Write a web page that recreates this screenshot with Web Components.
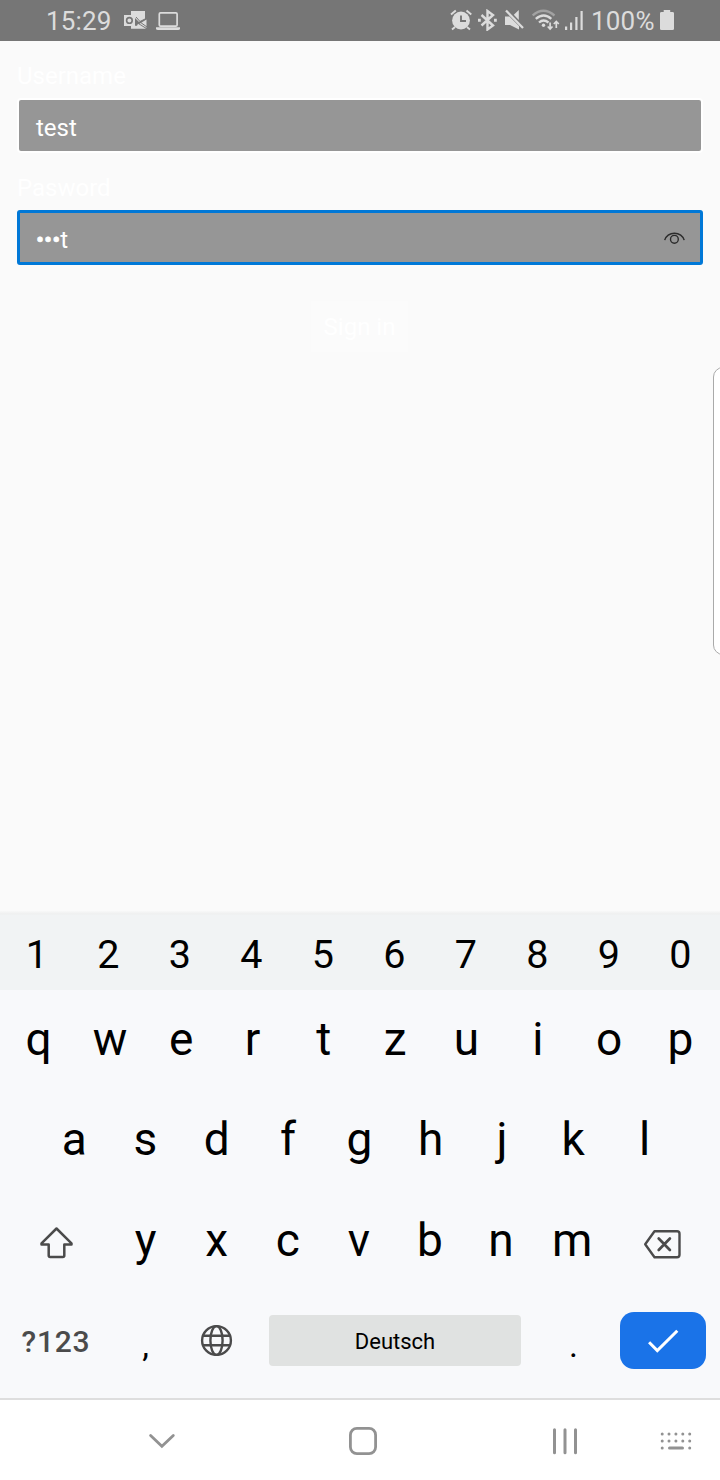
<!DOCTYPE html>
<html lang="en">
<head>
<meta charset="utf-8">
<title>Sign in</title>
<style>
html,body{margin:0;padding:0;width:720px;height:1480px;overflow:hidden;background:#fafafa;font-family:Roboto,sans-serif}
</style>
</head>
<body>
<phone-screen></phone-screen>
<script>
const define = (name, html, setup) => {
  const t = document.createElement('template');
  t.innerHTML = html;
  customElements.define(name, class extends HTMLElement {
    connectedCallback() {
      if (this.shadowRoot) return;
      this.attachShadow({mode: 'open'}).appendChild(t.content.cloneNode(true));
      if (setup) setup(this, this.shadowRoot);
    }
  });
};

/* Glyphs: [viewBox, markup]; the drawn size equals the viewBox size. */
const ICONS = {
  outlook: ['124 10 24 20', '<path d="M131 11h14v8l-6 3-4-4h-4zM146.500 19.500v8.500l-7-4.300zM131 28.800v-3h6l1-2 8 5z" fill="#dcdcdc"/><path d="M124 15h11v11h-11z" fill="#dcdcdc"/><path d="M136 17l4 4.500 7-3.500M136 24l4-2 7 5" stroke="#767676" stroke-width="1" fill="none"/><circle cx="129.400" cy="20.400" r="2.800" fill="none" stroke="#767676" stroke-width="1.600"/>'],
  laptop: ['156 10 24 20', '<rect x="159.300" y="12.900" width="17.800" height="13.300" rx="1.200" fill="none" stroke="#dcdcdc" stroke-width="1.700"/><path d="M156 27.200h24v1.200q0 1.600-2 1.600h-20q-2 0-2-1.600z" fill="#dcdcdc"/>'],
  alarm: ['450 9 22 22', '<g fill="none" stroke="#dcdcdc" stroke-width="1.900"><path d="M451 14.500l4.800-4M466.500 10.500l4.800 4M455 27l-3 2.500M467 27l3 2.500"/></g><circle cx="461" cy="20.500" r="8.900" fill="#dcdcdc"/><path d="M461 15.500v5.500h5" fill="none" stroke="#767676" stroke-width="1.900"/>'],
  bluetooth: ['478 9 20 22', '<path d="M481.500 15l11.500 10.500-5.500 4V11l5.500 4L481.500 25.500" fill="none" stroke="#dcdcdc" stroke-width="2.400"/><path d="M478 18.700h2.800v3H478zM494 18.700h2.800v3H494z" fill="#dcdcdc"/>'],
  mute: ['504 9 20 22', '<path d="M505 16.500h4.500L519 26v3.500L510 25h-5zM518.800 10v10l-5-5.200z" fill="#dcdcdc"/><path d="M506 10.500l17 17.500" stroke="#dcdcdc" stroke-width="2.300"/>'],
  wifi: ['532 9 28 22', '<g fill="none" stroke="#dcdcdc" stroke-width="2.300"><path d="M532.700 15.500q10.500-9.500 21.800 0" stroke="#a2a2a2"/><path d="M535.800 18.900q8-6.800 15.500 0"/><path d="M539 22.500q4.500-4 9.500 0"/></g><circle cx="543.500" cy="25.200" r="1.700" fill="#dcdcdc"/><path d="M550.100 22.500v6.500M547.700 26.500l2.400 2.500 2.400-2.500M556.300 28v-6.500M553.800 24l2.500-2.500 2.500 2.500" fill="none" stroke="#dcdcdc" stroke-width="1.700"/>'],
  signal: ['564 9 20 22', '<path d="M565 26.500h2.200v3.500H565zM570 22.500h2.200V30H570zM575.300 17h2.200v13h-2.200zM580.500 11h2.200v19h-2.200z" fill="#dcdcdc"/>'],
  battery: ['660 9 15 22', '<path d="M663.700 10h6.500v2h2.300q1.500 0 1.500 1.300v15.500q0 1.300-1.500 1.300h-11q-1.500 0-1.500-1.300V13.300q0-1.300 1.500-1.300h2.200z" fill="#dcdcdc"/>'],
  eye: ['663 229 23 18', '<g fill="none" stroke="#2b2b2b" stroke-width="1.400"><path d="M664.700 240.200a10 9 0 0 1 19.500 0"/><circle cx="674.400" cy="239.300" r="3.900"/></g>'],
  shift: ['39 1226 36 34', '<path d="M56.500 1228.500L41.500 1243.300V1244.400H48.700V1255.500Q48.700 1257 50.200 1257H62.800Q64.300 1257 64.300 1255.500V1244.400H71.500V1243.300z" fill="none" stroke="#4b4b4b" stroke-width="2.500" stroke-linejoin="round"/>'],
  backspace: ['643 1228 40 32', '<path d="M654.500 1231.200h22.500q2.500 0 2.500 2.500v21q0 2.500-2.500 2.500h-22.500l-9.300-13z" fill="none" stroke="#4b4b4b" stroke-width="2.400" stroke-linejoin="round"/><path d="M658.700 1238.500l11.200 11.500M669.900 1238.500l-11.200 11.500" stroke="#4b4b4b" stroke-width="2.700" stroke-linecap="round"/>'],
  globe: ['200 1324 33 33', '<g fill="none" stroke="#4b4b4b" stroke-width="2.400"><circle cx="216.500" cy="1340.500" r="14.400"/><ellipse cx="216.500" cy="1340.500" rx="6.100" ry="14.400"/><path d="M203 1335.700h27M203 1345.300h27"/></g>'],
  check: ['647 1328 32 26', '<path d="M649.100 1342.300l8.200 8.300 20-19.900" fill="none" stroke="#fff" stroke-width="3"/>'],
  hide: ['148 1432 28 18', '<path d="M150.600 1435.500l11.300 10.800 11.400-10.800" fill="none" stroke="#929292" stroke-width="2.800" stroke-linecap="round"/>'],
  home: ['348 1426 30 30', '<rect x="350.400" y="1428.400" width="25.200" height="25.200" rx="6.500" fill="none" stroke="#929292" stroke-width="2.800"/>'],
  recents: ['551 1426 28 30', '<path d="M554.500 1429.700v23M565 1429.700v23M575.500 1429.700v23" stroke="#929292" stroke-width="3" stroke-linecap="round"/>'],
  keyboard: ['660 1431 32 20', '<g fill="none" stroke="#929292" stroke-width="3" stroke-linecap="round"><path d="M662.200 1434h.01M669 1434h.01M675.900 1434h.01M682.800 1434h.01M689.700 1434h.01M662.200 1441h.01M669 1441h.01M675.900 1441h.01M682.800 1441h.01M689.700 1441h.01M662.200 1448h.01M689.700 1448h.01M669.500 1448h13"/></g>']
};
define('ui-icon', '<style>:host{display:block;flex:none}svg{display:block}</style><svg></svg>', (el, root) => {
  const [vb, body] = ICONS[el.getAttribute('name')];
  const [, , w, h] = vb.split(' ');
  const s = root.querySelector('svg');
  s.setAttribute('viewBox', vb);
  s.setAttribute('width', w);
  s.setAttribute('height', h);
  s.innerHTML = body;
});

define('status-bar', `<style>
:host{display:flex;align-items:center;box-sizing:border-box;height:41px;background:#767676;color:#dcdcdc;font-size:26px;padding:0 45px 1px 46px}
span{line-height:40px;height:40px;padding-top:1px;box-sizing:border-box;white-space:nowrap}
.time{width:78px;letter-spacing:.15px}.grow{flex:1}.pct{width:69px;letter-spacing:.2px}
</style>
<span class="time">15:29</span><ui-icon name="outlook"></ui-icon><ui-icon name="laptop" style="margin-left:8px"></ui-icon>
<div class="grow"></div>
<ui-icon name="alarm"></ui-icon><ui-icon name="bluetooth" style="margin-left:6px"></ui-icon><ui-icon name="mute" style="margin-left:6px"></ui-icon><ui-icon name="wifi" style="margin-left:8px"></ui-icon><ui-icon name="signal" style="margin-left:4px"></ui-icon><span class="pct" style="margin-left:7px">100%</span><ui-icon name="battery"></ui-icon>`);

define('text-field', `<style>
:host{display:block;font-size:24px;color:#fff}
label{display:block;height:28px;line-height:28px;margin-bottom:8px}
.box{display:flex;align-items:center;justify-content:space-between;box-sizing:border-box;height:55px;border:2px solid #fff;border-radius:4px;background:#969696;padding:5px 15px 0 17px}
:host([focused]) .box{border:3px solid #0078d7;border-radius:3px;padding:5px 14px 0 16px}
b{font-weight:400;-webkit-text-stroke:.7px #fff}
::slotted(ui-icon){margin-top:-5px}
</style><label></label><div class="box"><span><b></b><i style="font-style:normal"></i></span><slot></slot></div>`, (el, root) => {
  const [, dots, rest] = el.getAttribute('value').match(/^(•*)(.*)$/);
  root.querySelector('label').textContent = el.getAttribute('label');
  root.querySelector('b').textContent = dots;
  root.querySelector('i').textContent = rest;
});

define('sign-in-form', `<style>
:host{display:block;padding:21px 17px 0}
text-field+text-field{margin-top:21px}
button{display:block;box-sizing:border-box;width:97px;height:51px;margin:36px auto 0 294px;padding:0;border:0;background:#fbfbfb;color:#fff;font:24px Roboto,sans-serif}
</style>
<text-field label="Username" value="test"></text-field>
<text-field label="Pasword" value="•••t" focused><ui-icon name="eye"></ui-icon></text-field>
<button>Sign in</button>`);

define('edge-handle', `<style>:host{position:absolute;left:713px;top:367px;width:20px;height:288px;box-sizing:border-box;border:1px solid #aaa;border-radius:10px;background:#fff}</style>`);

define('key-cap', `<style>:host{display:flex;align-items:center;justify-content:center;min-width:0}</style><slot></slot>`);

define('key-board', `<style>
:host{display:block;height:487px;background:#f8f9fb;color:#000;font-size:46px}
.row{display:flex;box-sizing:border-box;height:101px}
.row key-cap{width:71.3px;flex:none}
.row.digits key-cap{width:71.5px}
.digits{height:79px;background:linear-gradient(#f8f8f8,#eeefef 3px,#f1f3f4 4px);font-size:39.5px;padding:7px 0 0 1.2px}
.q{height:99px;padding:0 0 2px 3px}
.a{padding:0 0 2px 38.500px}
.row.y .wide{width:110px}.row.y .wide.end{width:108px}.y{padding-bottom:2px}
.row.y key-cap:not(.wide){width:71.1px}
.y .wide ui-icon{margin:6px 0 0 3px}
.y .wide.end ui-icon{margin:8px 0 0 2px}
.row.bottom .sym{width:112px;font-size:30px;font-weight:500;color:#4b4b4b;letter-spacing:.8px}
.row.bottom .comma{width:67px;font-size:34px;padding-top:7px;box-sizing:border-box}
.row.bottom .globe{width:73px;padding:0 0 2px 2px;box-sizing:border-box}
.row.bottom .space{width:252px;height:49px;padding-top:2px;margin:24px 0 0 17px;border-radius:4px;background:#e0e2e1;font-size:22px}
.row.bottom .dot{width:99px;padding:7px 0 0 6px;box-sizing:border-box;font-size:34px}
.row.bottom .enter{width:86px;height:57px;margin-top:21px;border-radius:14px;background:#1a73e8}
</style>
<div class="row digits"></div><div class="row q"></div><div class="row a"></div>
<div class="row y"><key-cap class="wide"><ui-icon name="shift"></ui-icon></key-cap><key-cap class="wide end"><ui-icon name="backspace"></ui-icon></key-cap></div>
<div class="row bottom"><key-cap class="sym">?123</key-cap><key-cap class="comma">,</key-cap><key-cap class="globe"><ui-icon name="globe"></ui-icon></key-cap><key-cap class="space">Deutsch</key-cap><key-cap class="dot">.</key-cap><key-cap class="enter"><ui-icon name="check"></ui-icon></key-cap></div>`, (el, root) => {
  const fill = (sel, keys) => {
    const row = root.querySelector(sel), end = row.querySelector('.end');
    for (const k of keys) {
      const c = document.createElement('key-cap');
      c.textContent = k;
      row.insertBefore(c, end);
    }
  };
  fill('.digits', '1234567890');
  fill('.q', 'qwertzuiop');
  fill('.a', 'asdfghjkl');
  fill('.y', 'yxcvbnm');
});

define('nav-bar', `<style>:host{display:flex;align-items:center;box-sizing:border-box;height:82px;border-top:2px solid #dedede;background:#fff;padding:2px 28px 0 148px;justify-content:space-between}</style>
<ui-icon name="hide"></ui-icon><ui-icon name="home" style="margin-left:91px"></ui-icon><ui-icon name="recents" style="margin-left:92px"></ui-icon><ui-icon name="keyboard"></ui-icon>`);

define('phone-screen', `<style>
:host{display:flex;flex-direction:column;position:relative;width:720px;height:1480px;overflow:hidden;background:#fafafa}
sign-in-form{flex:1}
</style><status-bar></status-bar><sign-in-form></sign-in-form><key-board></key-board><nav-bar></nav-bar><edge-handle></edge-handle>`);
</script>
</body>
</html>
